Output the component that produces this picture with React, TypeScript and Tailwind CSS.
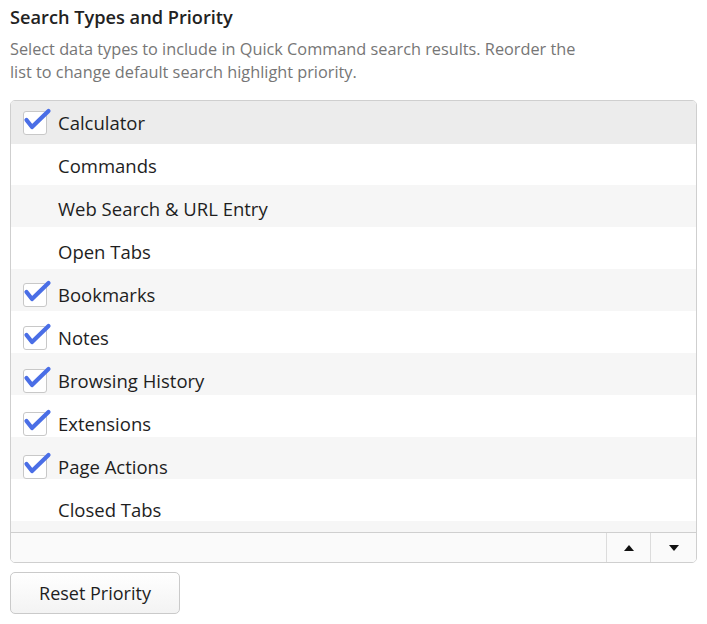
import React from 'react';

const items = [
  { label: 'Calculator', checked: true },
  { label: 'Commands', checked: false },
  { label: 'Web Search & URL Entry', checked: false },
  { label: 'Open Tabs', checked: false },
  { label: 'Bookmarks', checked: true },
  { label: 'Notes', checked: true },
  { label: 'Browsing History', checked: true },
  { label: 'Extensions', checked: true },
  { label: 'Page Actions', checked: true },
  { label: 'Closed Tabs', checked: false },
];

function CheckMark() {
  return (
    <svg className="absolute -top-[6px] -left-[1px] w-[30px] h-[30px]" viewBox="0 0 30 30">
      <path d="M3.5 14 L9 21 L25.5 5" fill="none" stroke="#4a6ee6" strokeWidth="4.2" strokeLinecap="round" strokeLinejoin="round" />
    </svg>
  );
}

function Row({ label, checked, selected }: { label: string; checked: boolean; selected: boolean }) {
  return (
    <div className={`flex items-center h-[43px] shrink-0 ${selected ? 'bg-[#ececec]' : ''}`}>
      <div className="w-[47px] flex justify-center">
        {checked && (
          <div className="relative w-[24px] h-[24px] rounded-[3px] border border-[#c8c8c8] bg-white">
            <CheckMark />
          </div>
        )}
      </div>
      <span className="text-[18.5px] text-[#1e1e1e]">{label}</span>
    </div>
  );
}

export default function App() {
  return (
    <div className="w-[707px] h-[624px] bg-white px-[10px] pt-[4px]" style={{ fontFamily: '"Open Sans", "Noto Sans", sans-serif' }}>
      <h1 className="text-[18.2px] font-semibold text-[#222] leading-[26px]">Search Types and Priority</h1>
      <p className="mt-[8px] text-[16.3px] text-[#767676] leading-[23px] w-[585px]">
        Select data types to include in Quick Command search results. Reorder the list to change default search highlight priority.
      </p>
      <div className="mt-[16px] border border-[#cfcfcf] rounded-[5px] overflow-hidden">
        <div className="h-[431px] overflow-hidden flex flex-col bg-[repeating-linear-gradient(#f6f6f6_0px,#f6f6f6_42px,#ffffff_42px,#ffffff_84px)]">
          {items.map((it, i) => (
            <Row key={it.label} label={it.label} checked={it.checked} selected={i === 0} />
          ))}
        </div>
        <div className="flex justify-end h-[30px] border-t border-[#cfcfcf] bg-[#fafafa]">
          <button className="w-[44px] flex items-center justify-center border-l border-[#dcdcdc]">
            <svg width="12" height="8" viewBox="0 0 12 8"><path d="M6 1 L11 7 L1 7 Z" fill="#111" /></svg>
          </button>
          <button className="w-[46px] flex items-center justify-center border-l border-[#dcdcdc]">
            <svg width="12" height="8" viewBox="0 0 12 8"><path d="M1 1 L11 1 L6 7 Z" fill="#111" /></svg>
          </button>
        </div>
      </div>
      <button className="mt-[9px] w-[170px] h-[42px] rounded-[5px] border border-[#cacaca] bg-gradient-to-b from-white to-[#f3f3f3] text-[18px] text-[#1e1e1e]">
        Reset Priority
      </button>
    </div>
  );
}
